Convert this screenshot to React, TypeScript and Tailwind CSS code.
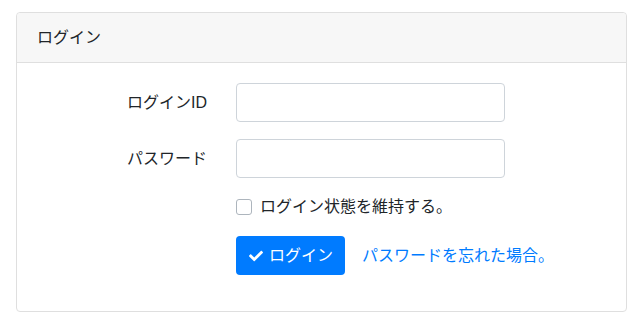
import React from 'react';

const font = { fontFamily: '"Liberation Sans", "Noto Sans CJK JP", sans-serif' };

const CheckIcon: React.FC = () => (
  <svg viewBox="0 0 512 512" className="w-[14px] h-[14px]" fill="currentColor">
    <path d="M173.898 439.404l-166.4-166.4c-9.997-9.997-9.997-26.206 0-36.204l36.203-36.204c9.997-9.998 26.207-9.998 36.204 0L192 312.69 432.095 72.596c9.997-9.997 26.207-9.997 36.204 0l36.203 36.204c9.997 9.997 9.997 26.206 0 36.204l-294.4 294.401c-9.998 9.997-26.207 9.997-36.204-.001z" />
  </svg>
);

export default function App() {
  return (
    <div className="w-[644px] h-[328px] bg-white pt-[12px] px-[16px] text-[#212529] text-[16px]" style={font}>
      <div className="w-[611px] border border-[#dfdfdf] rounded-[4px]">
        {/* Header */}
        <div className="h-[50px] flex items-center px-[20px] bg-[#f7f7f7] border-b border-[#dfdfdf] rounded-t-[4px]">
          ログイン
        </div>

        {/* Body */}
        <div className="pt-[20px] pb-[36px]">
          <div className="flex items-center mb-[17px]">
            <label className="w-[190px] text-right">ログインID</label>
            <input type="text" className="ml-[29px] w-[269px] h-[39px] border border-[#ced4da] rounded-[4px] px-3 outline-none" />
          </div>
          <div className="flex items-center mb-[17px]">
            <label className="w-[190px] text-right">パスワード</label>
            <input type="password" className="ml-[29px] w-[269px] h-[39px] border border-[#ced4da] rounded-[4px] px-3 outline-none" />
          </div>
          <div className="flex items-center h-[24px] pl-[219px] mb-[17px]">
            <span className="w-[16px] h-[16px] border border-[#adb5bd] rounded-[3px] bg-white" />
            <span className="ml-[8px]">ログイン状態を維持する。</span>
          </div>
          <div className="flex items-center pl-[219px]">
            <button className="h-[39px] w-[109px] flex items-center gap-[6px] pl-[13px] bg-[#007bff] text-white rounded-[4px]">
              <CheckIcon />
              <span>ログイン</span>
            </button>
            <a className="ml-[17px] text-[#007bff]">パスワードを忘れた場合。</a>
          </div>
        </div>
      </div>
    </div>
  );
}
